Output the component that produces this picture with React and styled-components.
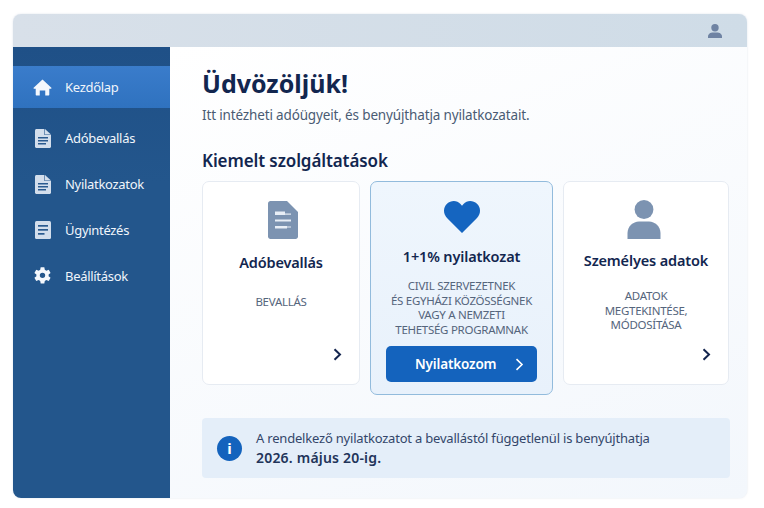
import styled, { createGlobalStyle } from "styled-components";

const GlobalStyle = createGlobalStyle`
  html, body {
    margin: 0;
    padding: 0;
    background: #fff;
    font-family: "Noto Sans", "Open Sans", sans-serif;
  }
`;

const navItems = [
  { label: "Kezdőlap", icon: "home", active: true },
  { label: "Adóbevallás", icon: "file" },
  { label: "Nyilatkozatok", icon: "file" },
  { label: "Ügyintézés", icon: "note" },
  { label: "Beállítások", icon: "gear" },
];

const HomeIcon = () => (
  <svg width="19" height="17" viewBox="0 0 20 18">
    <path fill="#f4f8fd" d="M10 .6 19.400 9.200c.4.4.1 1-.4 1h-1.800v6.600c0 .4-.3.7-.7.7h-3.600v-5.200H7.100v5.200H3.500c-.4 0-.7-.3-.7-.7v-6.600H1c-.5 0-.8-.6-.4-1z" />
  </svg>
);

const FileIcon = () => (
  <svg width="16" height="19" viewBox="0 0 16 19">
    <path fill="#d3deec" d="M1.500 0H10l6 5.500v12c0 .8-.7 1.500-1.500 1.500h-13C.7 19 0 18.300 0 17.500v-16C0 .7.700 0 1.500 0z" />
    <path fill="#2a5a8f" d="M10 0v5.500h6v.6H9.400V0z" />
    <rect x="3" y="8" width="10" height="1.500" fill="#2a5a8f" />
    <rect x="3" y="11" width="10" height="1.500" fill="#2a5a8f" />
    <rect x="3" y="14" width="8" height="1.500" fill="#2a5a8f" />
  </svg>
);

const LargeFileIcon = () => (
  <svg width="30" height="38" viewBox="0 0 30 38">
    <path fill="#7c93b1" d="M2.500 0H19l11 11v24.500c0 1.400-1.100 2.500-2.500 2.500h-25C1.100 38 0 36.900 0 35.500v-33C0 1.100 1.100 0 2.500 0z" />
    <rect x="7" y="10.500" width="10" height="3.500" fill="#e8eef6" />
    <rect x="17" y="12.500" width="6" height="1.200" fill="#e8eef6" />
    <rect x="7" y="18.500" width="16" height="2" fill="#e8eef6" />
    <rect x="7" y="25" width="12" height="2.500" fill="#e8eef6" />
    <rect x="19" y="25.500" width="4" height="1" fill="#e8eef6" />
  </svg>
);

const NoteIcon = () => (
  <svg width="16" height="18" viewBox="0 0 16 18">
    <rect width="16" height="18" rx="1.500" fill="#d3deec" />
    <rect x="3" y="4" width="10" height="1.700" fill="#2a5a8f" />
    <rect x="3" y="8" width="10" height="1.700" fill="#2a5a8f" />
    <rect x="3" y="12" width="6.500" height="1.700" fill="#2a5a8f" />
  </svg>
);

const GearIcon = () => (
  <svg width="20" height="20" viewBox="0 0 24 24">
    <path
      fill="#f4f8fd"
      fillRule="evenodd"
      d="M14.300 1h-4.600l-.6 3.200c-.7.300-1.300.600-1.900 1.100L4.100 4.200 1.800 8.100l2.500 2.100c-.1.700-.1 1.300 0 2l-2.500 2.100 2.300 3.900 3.100-1.100c.6.500 1.200.8 1.900 1.100l.6 3.300h4.600l.6-3.300c.7-.3 1.300-.6 1.900-1.100l3.100 1.100 2.300-3.900-2.500-2.100c.1-.7.100-1.300 0-2l2.500-2.100-2.300-3.900-3.100 1.100c-.6-.5-1.200-.8-1.900-1.100zM12 7.800a3.400 3.400 0 1 1 0 6.800 3.400 3.400 0 0 1 0-6.800z"
    />
  </svg>
);

const LargePersonIcon = () => (
  <svg width="34" height="39" viewBox="0 0 34 39">
    <circle cx="17" cy="9.500" r="9.400" fill="#7c93b1" />
    <path fill="#7c93b1" d="M.5 39v-6C.5 26.500 6 21.500 12 21.500h10c6 0 11.500 5 11.500 11.500v6z" />
  </svg>
);

const SmallPersonIcon = () => (
  <svg width="14" height="14" viewBox="0 0 14 14">
    <circle cx="7" cy="3.800" r="3.700" fill="#6f83a3" />
    <path fill="#6f83a3" d="M0 14v-1.500C0 10 2.500 8.500 5 8.500h4c2.500 0 5 1.500 5 4V14z" />
  </svg>
);

const Chevron = ({ color = "#14254f", weight = 2 }) => (
  <svg width="9" height="13" viewBox="0 0 9 13" fill="none">
    <path d="M1.500 1.200 7 6.500l-5.500 5.300" stroke={color} strokeWidth={weight} />
  </svg>
);

const navIcons = {
  home: <HomeIcon />,
  file: <FileIcon />,
  note: <NoteIcon />,
  gear: <GearIcon />,
};

const App = () => (
  <Page>
    <GlobalStyle />
    <Window>
      <TopBar>
        <SmallPersonIcon />
      </TopBar>
      <Body>
        <Sidebar>
          {navItems.map((item) => (
            <NavItem key={item.label} $active={item.active}>
              <NavIcon>{navIcons[item.icon]}</NavIcon>
              {item.label}
            </NavItem>
          ))}
        </Sidebar>
        <Main>
          <Title>Üdvözöljük!</Title>
          <Subtitle>Itt intézheti adóügyeit, és benyújthatja nyilatkozatait.</Subtitle>
          <SectionTitle>Kiemelt szolgáltatások</SectionTitle>
          <Cards>
            <Card>
              <CardIcon $left={4}>
                <LargeFileIcon />
              </CardIcon>
              <CardTitle $gap={13}>Adóbevallás</CardTitle>
              <CardText $gap={23}>BEVALLÁS</CardText>
              <CardArrow>
                <Chevron />
              </CardArrow>
            </Card>
            <FeaturedCard>
              <HeartIcon viewBox="0 0 36 32">
                <path
                  fill="#1565c0"
                  d="M18 32 3 17C-1 13-1 6.500 3 2.800 7-.9 13-.9 16.500 3L18 4.700 19.500 3C23-.9 29-.9 33 2.800c4 3.700 4 10.200 0 14.200z"
                />
              </HeartIcon>
              <CardTitle $gap={13}>1+1% nyilatkozat</CardTitle>
              <CardText $gap={13}>
                CIVIL SZERVEZETNEK
                <br />
                ÉS EGYHÁZI KÖZÖSSÉGNEK
                <br />
                VAGY A NEMZETI
                <br />
                TEHETSÉG PROGRAMNAK
              </CardText>
              <PrimaryButton>
                Nyilatkozom
                <Chevron color="#fff" weight={1.600} />
              </PrimaryButton>
            </FeaturedCard>
            <Card>
              <CardIcon $right={4}>
                <LargePersonIcon />
              </CardIcon>
              <CardTitle $gap={11}>Személyes adatok</CardTitle>
              <CardText $gap={19}>
                ADATOK
                <br />
                MEGTEKINTÉSE,
                <br />
                MÓDOSÍTÁSA
              </CardText>
              <CardArrow>
                <Chevron />
              </CardArrow>
            </Card>
          </Cards>
          <Notice>
            <InfoBadge>i</InfoBadge>
            <NoticeText>
              A rendelkező nyilatkozatot a bevallástól függetlenül is benyújthatja
              <br />
              <strong>2026. május 20-ig.</strong>
            </NoticeText>
          </Notice>
        </Main>
      </Body>
    </Window>
  </Page>
);

export default App;

// Styled Components

const Page = styled.div`
  width: 764px;
  height: 508px;
  padding: 14px 17px 10px 13px;
  box-sizing: border-box;
  overflow: hidden;
`;

const Window = styled.div`
  height: 484px;
  border-radius: 8px;
  overflow: hidden;
  display: flex;
  flex-direction: column;
  background: #f6f9fd;
  box-shadow: 0 0 2px rgba(120, 140, 170, 0.25);
`;

const TopBar = styled.div`
  height: 33px;
  flex-shrink: 0;
  display: flex;
  align-items: center;
  justify-content: flex-end;
  padding-right: 25px;
  background: linear-gradient(90deg, #d8e0e9, #cfdce7);
`;

const Body = styled.div`
  flex: 1;
  display: flex;
  min-height: 0;
`;

const Sidebar = styled.nav`
  width: 157px;
  flex-shrink: 0;
  padding-top: 19px;
  box-sizing: border-box;
  background: linear-gradient(180deg, #1f5087, #23568c 30%);
  display: flex;
  flex-direction: column;
`;

const NavItem = styled.div`
  height: ${(p) => (p.$active ? "42px" : "46px")};
  margin-bottom: ${(p) => (p.$active ? "7px" : "0")};
  display: flex;
  align-items: center;
  gap: 13px;
  padding-left: 20px;
  font-size: 13px;
  letter-spacing: -0.3px;
  color: #f0f5fb;
  background: ${(p) => (p.$active ? "linear-gradient(180deg, #3a7ccb, #2f72bf)" : "transparent")};
`;

const NavIcon = styled.span`
  width: 19px;
  display: flex;
  justify-content: center;
`;

const Main = styled.main`
  flex: 1;
  padding: 20px 17px 0 32px;
  background: linear-gradient(160deg, #ffffff 0%, #f3f7fc 100%);
`;

const Title = styled.h1`
  margin: 0;
  font-size: 25px;
  line-height: 32px;
  font-weight: 700;
  color: #12264f;
`;

const Subtitle = styled.p`
  margin: 6px 0 0;
  font-size: 13.500px;
  line-height: 20px;
  letter-spacing: -0.15px;
  color: #4a5b73;
`;

const SectionTitle = styled.h2`
  margin: 24px 0 0;
  font-size: 17px;
  line-height: 24px;
  font-weight: 600;
  letter-spacing: -0.1px;
  color: #12264f;
`;

const Cards = styled.div`
  margin-top: 8px;
  display: flex;
  align-items: flex-start;
  gap: 10px;
`;

const Card = styled.div`
  position: relative;
  width: 158px;
  height: 204px;
  box-sizing: border-box;
  padding-top: 18px;
  display: flex;
  flex-direction: column;
  align-items: center;
  text-align: center;
  background: #fff;
  border: 1px solid #e6ebf2;
  border-radius: 7px;

  &:last-child {
    width: 166px;
  }
`;

const FeaturedCard = styled(Card)`
  width: 183px;
  height: 214px;
  padding-top: 19px;
  background: linear-gradient(180deg, #eff6fd, #e8f1fb);
  border-color: #92bbdc;
`;

const CardIcon = styled.div`
  height: 39px;
  display: flex;
  align-items: center;
  padding-left: ${(p) => p.$left || 0}px;
  padding-right: ${(p) => p.$right || 0}px;
`;

const HeartIcon = styled.svg`
  width: 36px;
  height: 32px;
  flex-shrink: 0;
`;

const CardTitle = styled.h3`
  margin: ${(p) => p.$gap}px 0 0;
  font-size: 14.500px;
  line-height: 20px;
  font-weight: 600;
  letter-spacing: -0.15px;
  color: #12264f;
`;

const CardText = styled.p`
  margin: ${(p) => p.$gap}px 0 0;
  font-size: 11.500px;
  line-height: 14.500px;
  letter-spacing: -0.28px;
  color: #55657c;
`;

const CardArrow = styled.span`
  position: absolute;
  right: 17px;
  bottom: 23px;
  display: flex;
`;

const PrimaryButton = styled.button`
  margin-top: 9px;
  width: 151px;
  height: 36px;
  padding: 0 13px 0 29px;
  display: flex;
  align-items: center;
  justify-content: space-between;
  border: 0;
  border-radius: 5px;
  background: #1463bd;
  color: #fff;
  font-family: inherit;
  font-size: 13.500px;
  font-weight: 600;
  letter-spacing: -0.15px;
`;

const Notice = styled.div`
  margin-top: 23px;
  width: 528px;
  height: 60px;
  box-sizing: border-box;
  padding-left: 15px;
  display: flex;
  align-items: center;
  gap: 14px;
  background: #e4eef9;
  border-radius: 4px;
`;

const InfoBadge = styled.span`
  width: 25px;
  height: 25px;
  flex-shrink: 0;
  border-radius: 50%;
  display: flex;
  align-items: center;
  justify-content: center;
  background: #1463bd;
  color: #fff;
  font-size: 15px;
  font-weight: 700;
`;

const NoticeText = styled.p`
  margin: 0;
  font-size: 13px;
  line-height: 20px;
  letter-spacing: -0.2px;
  color: #33466a;

  strong {
    font-size: 14px;
    font-weight: 600;
    letter-spacing: 0.2px;
    color: #22345a;
  }
`;
